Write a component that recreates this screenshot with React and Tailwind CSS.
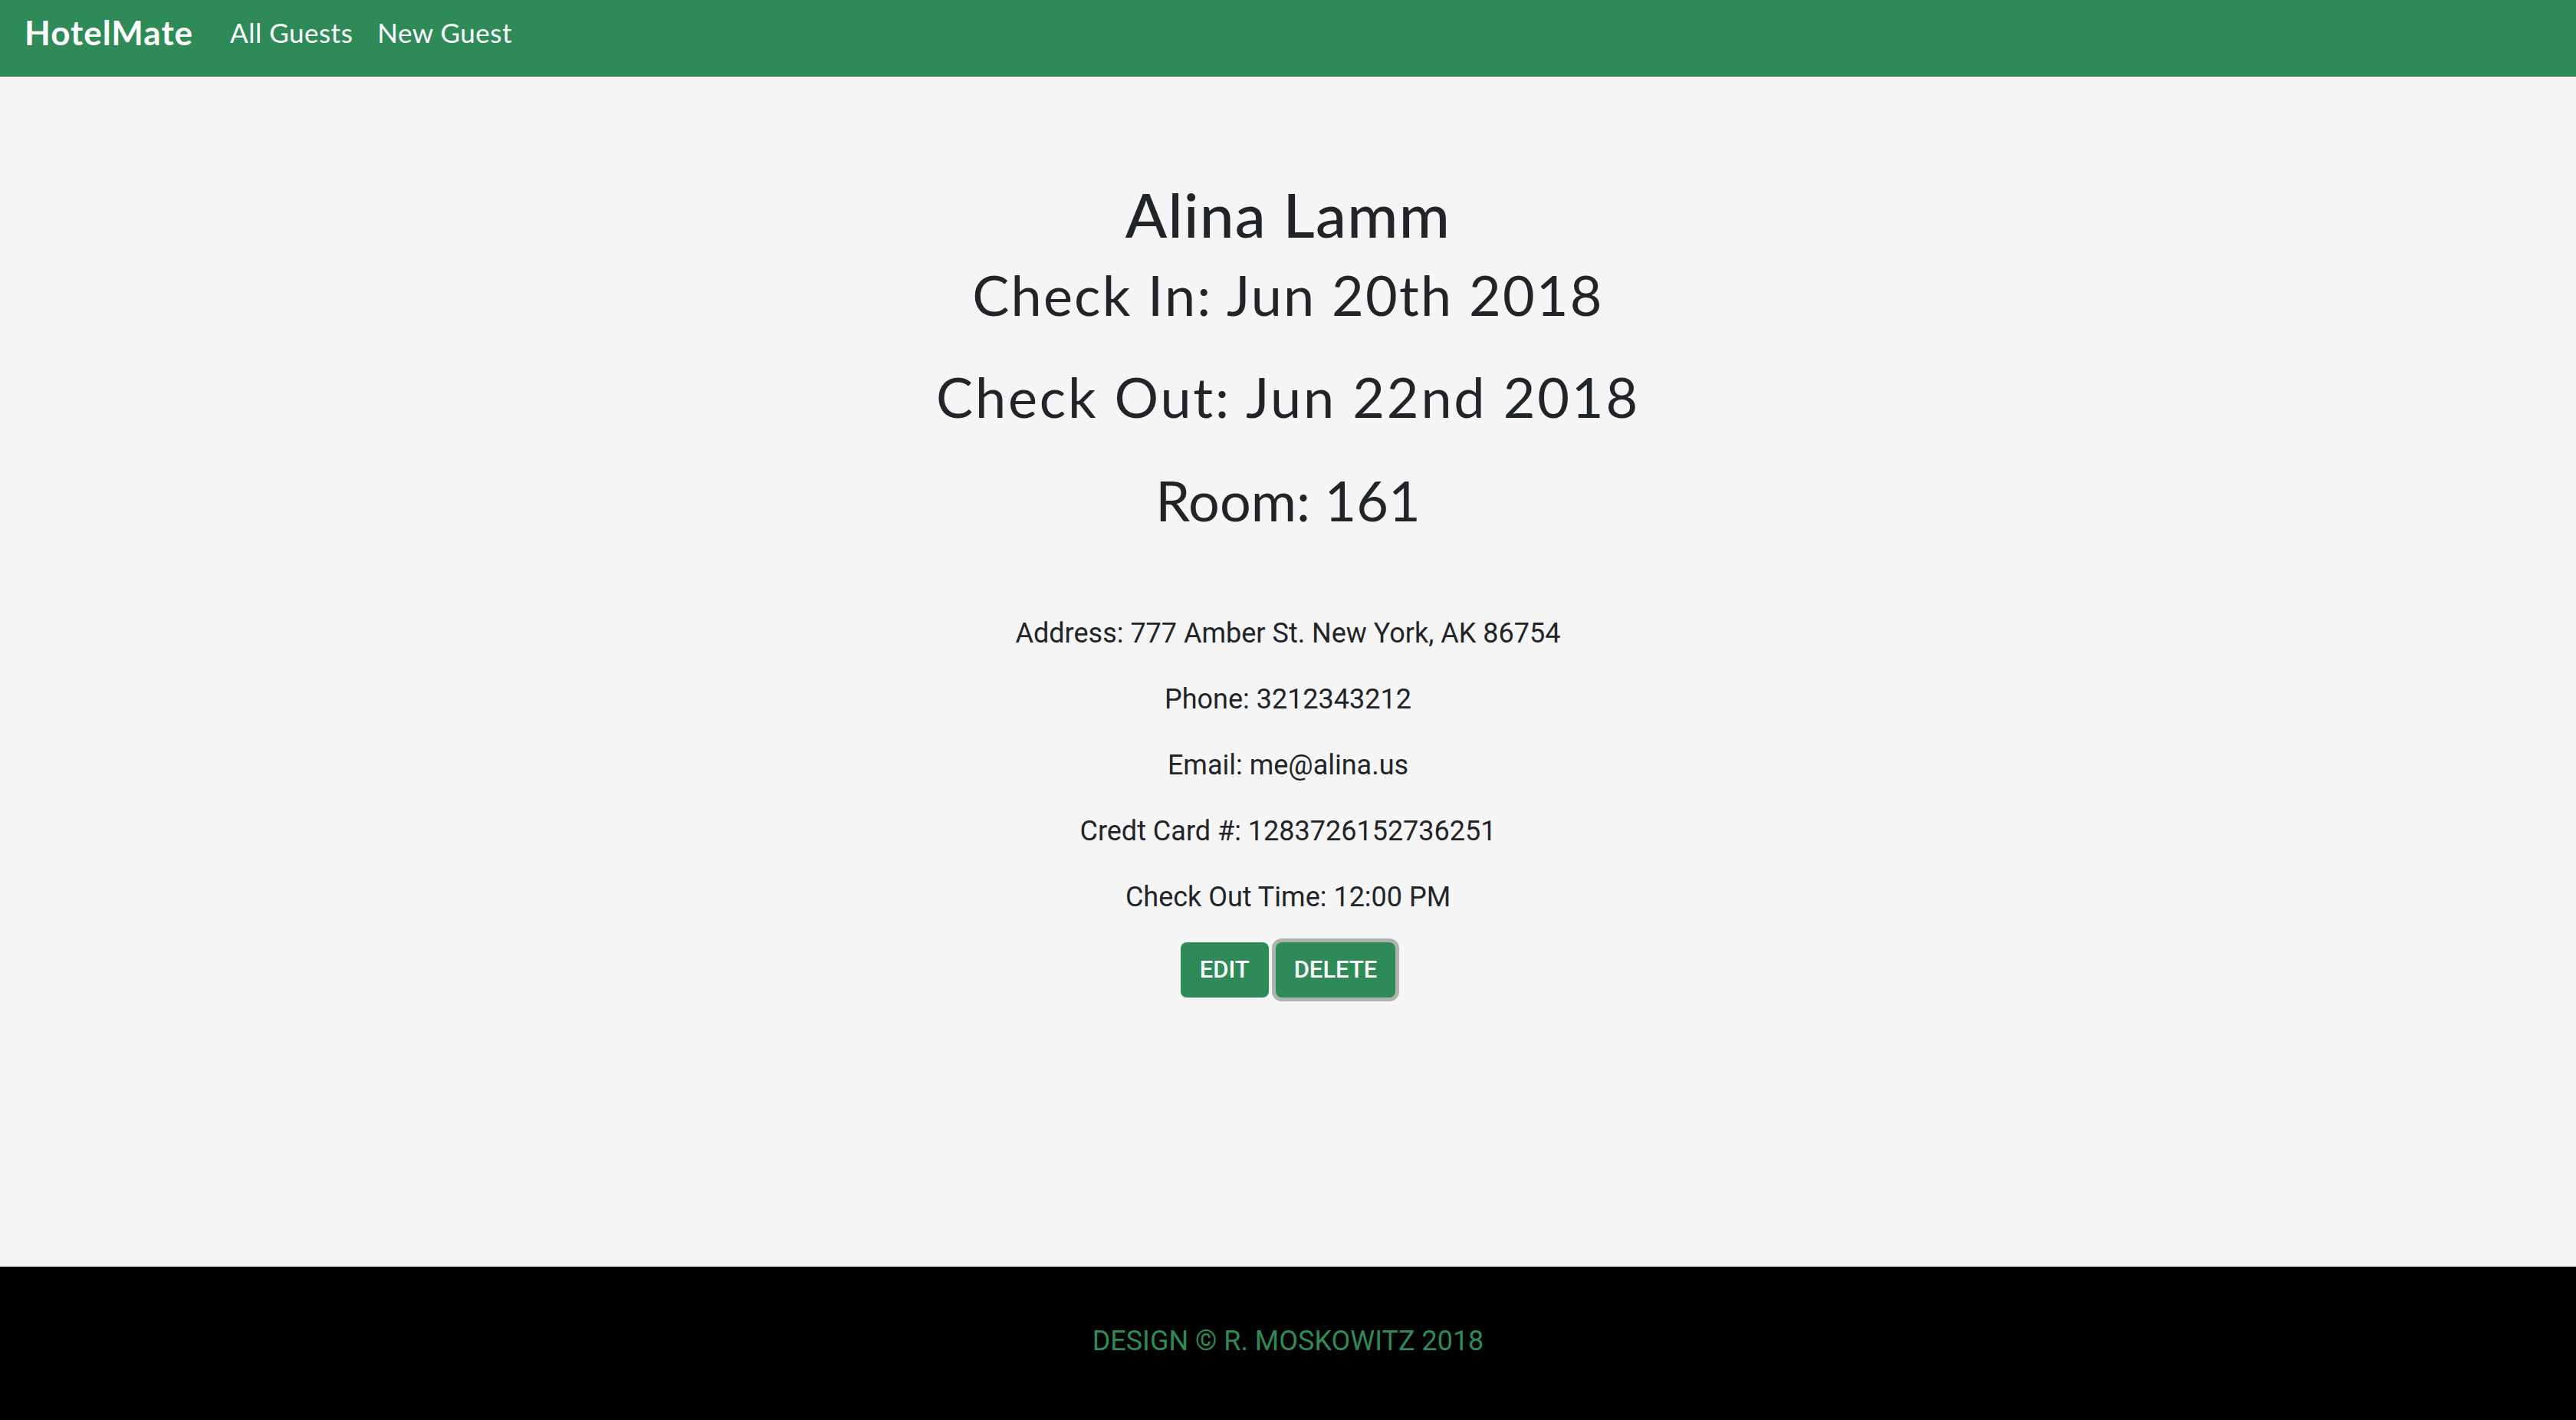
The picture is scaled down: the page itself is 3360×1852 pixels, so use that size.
const NAV = ["All Guests", "New Guest"];

const DETAILS = [
  "Address: 777 Amber St. New York, AK 86754",
  "Phone: 3212343212",
  "Email: me@alina.us",
  "Credt Card #: 1283726152736251",
  "Check Out Time: 12:00 PM",
];

export default function App() {
  return (
    <div className="min-h-screen flex flex-col bg-[#f5f5f5] text-[#212529] font-['Roboto',sans-serif]">
      {/* navbar */}
      <nav className="h-[100px] shrink-0 bg-[#2e8b57] flex items-center pl-[32px] pb-[16px] font-['Lato',sans-serif] text-white">
        <span className="text-[44px] font-bold leading-none tracking-[1px] mr-[48px]">HotelMate</span>
        <div className="flex gap-[32px] text-[35px] leading-none tracking-[0.5px]">
          {NAV.map((n) => (
            <a key={n} href="#" className="text-white">{n}</a>
          ))}
        </div>
      </nav>

      {/* guest detail */}
      <main className="flex-1 flex flex-col items-center text-center pt-[131px]">
        <h2 className="font-['Lato',sans-serif] text-[80px] font-medium leading-[1.2] tracking-[1.3px]">Alina Lamm</h2>
        <h3 className="font-['Lato',sans-serif] text-[72px] leading-[1.2] tracking-[2.2px] mt-[14px]">Check In: Jun 20th 2018</h3>
        <h3 className="font-['Lato',sans-serif] text-[72px] leading-[1.2] tracking-[2.8px] mt-[47px]">Check Out: Jun 22nd 2018</h3>
        <h3 className="font-['Lato',sans-serif] text-[72px] leading-[1.2] mt-[48px]">Room: 161</h3>

        <div className="flex flex-col gap-[35px] mt-[106px] text-[36px] leading-[51px]">
          {DETAILS.map((d) => (
            <p key={d}>{d}</p>
          ))}
        </div>

        <div className="flex gap-[9px] mt-[33px]">
          <button className="h-[72px] px-[25px] rounded-[8px] bg-[#2e8b57] text-white text-[31px] font-medium uppercase">
            Edit
          </button>
          <button className="h-[72px] px-[24px] rounded-[8px] bg-[#2e8b57] text-white text-[31px] font-medium uppercase ring-[5px] ring-[#adb3b0]">
            Delete
          </button>
        </div>
      </main>

      {/* footer */}
      <footer className="h-[200px] shrink-0 bg-black flex items-center justify-center pb-[6px]">
        <p className="text-[36px] text-[#2e8b57] uppercase">Design © R. Moskowitz 2018</p>
      </footer>
    </div>
  );
}
